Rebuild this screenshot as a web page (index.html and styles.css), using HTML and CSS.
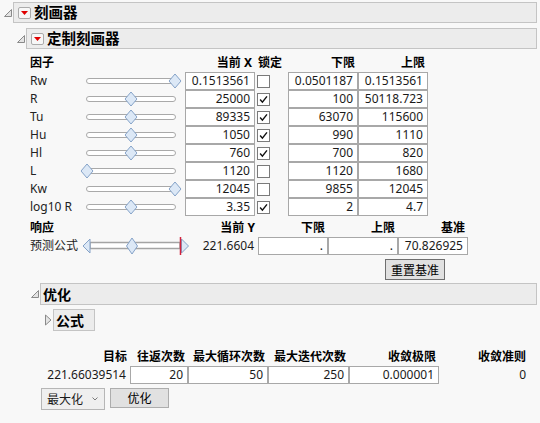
FILE: index.html
```html
<!DOCTYPE html>
<html lang="zh-CN">
  <head>
    <meta charset="UTF-8" />
    <meta name="viewport" content="width=device-width, initial-scale=1.0" />
    <link rel="stylesheet" href="styles.css">
    <title>刻画器</title>
  </head>
  <body>
    <div class="outline lvl1">
      <div class="ohead">
        <svg class="tri" viewBox="0 0 10 10"><polygon points="8.5,1.5 8.5,8.5 1.5,8.5" /></svg>
        <div class="obar">
          <span class="menu"><svg viewBox="0 0 7 4"><polygon points="0,0 7,0 3.5,4" /></svg></span>
          <span class="otitle">刻画器</span>
        </div>
      </div>

      <div class="obody body1">
        <div class="outline lvl2">
          <div class="ohead">
            <svg class="tri" viewBox="0 0 10 10"><polygon points="8.5,1.5 8.5,8.5 1.5,8.5" /></svg>
            <div class="obar">
              <span class="menu"><svg viewBox="0 0 7 4"><polygon points="0,0 7,0 3.5,4" /></svg></span>
              <span class="otitle">定制刻画器</span>
            </div>
          </div>

          <div class="obody body2">
            <!-- factors -->
            <div class="factors">
              <div class="hd left">因子</div>
              <div></div>
              <div class="hd">当前 X</div>
              <div class="hd left lock-hd">锁定</div>
              <div class="hd">下限</div>
              <div class="hd">上限</div>

              <div class="name">Rw</div>
              <div class="cell"><div class="track"><svg class="handle" style="left:100%" viewBox="0 0 13 15"><polygon points="6.5,0.5 12.5,7.5 6.5,14.5 0.5,7.5" /></svg></div></div>
              <div class="box">0.1513561</div>
              <div class="cell"><span class="check"></span></div>
              <div class="box">0.0501187</div>
              <div class="box">0.1513561</div>

              <div class="name">R</div>
              <div class="cell"><div class="track"><svg class="handle" style="left:49.8%" viewBox="0 0 13 15"><polygon points="6.5,0.5 12.5,7.5 6.5,14.5 0.5,7.5" /></svg></div></div>
              <div class="box">25000</div>
              <div class="cell"><span class="check"><svg viewBox="0 0 13 13"><path d="M2.5 6.5 L5.2 9.6 L10.6 2.8" /></svg></span></div>
              <div class="box">100</div>
              <div class="box">50118.723</div>

              <div class="name">Tu</div>
              <div class="cell"><div class="track"><svg class="handle" style="left:50%" viewBox="0 0 13 15"><polygon points="6.5,0.5 12.5,7.5 6.5,14.5 0.5,7.5" /></svg></div></div>
              <div class="box">89335</div>
              <div class="cell"><span class="check"><svg viewBox="0 0 13 13"><path d="M2.5 6.5 L5.2 9.6 L10.6 2.8" /></svg></span></div>
              <div class="box">63070</div>
              <div class="box">115600</div>

              <div class="name">Hu</div>
              <div class="cell"><div class="track"><svg class="handle" style="left:50%" viewBox="0 0 13 15"><polygon points="6.5,0.5 12.5,7.5 6.5,14.5 0.5,7.5" /></svg></div></div>
              <div class="box">1050</div>
              <div class="cell"><span class="check"><svg viewBox="0 0 13 13"><path d="M2.5 6.5 L5.2 9.6 L10.6 2.8" /></svg></span></div>
              <div class="box">990</div>
              <div class="box">1110</div>

              <div class="name">Hl</div>
              <div class="cell"><div class="track"><svg class="handle" style="left:50%" viewBox="0 0 13 15"><polygon points="6.5,0.5 12.5,7.5 6.5,14.5 0.5,7.5" /></svg></div></div>
              <div class="box">760</div>
              <div class="cell"><span class="check"><svg viewBox="0 0 13 13"><path d="M2.5 6.5 L5.2 9.6 L10.6 2.8" /></svg></span></div>
              <div class="box">700</div>
              <div class="box">820</div>

              <div class="name">L</div>
              <div class="cell"><div class="track"><svg class="handle" style="left:0%" viewBox="0 0 13 15"><polygon points="6.5,0.5 12.5,7.5 6.5,14.5 0.5,7.5" /></svg></div></div>
              <div class="box">1120</div>
              <div class="cell"><span class="check"></span></div>
              <div class="box">1120</div>
              <div class="box">1680</div>

              <div class="name">Kw</div>
              <div class="cell"><div class="track"><svg class="handle" style="left:100%" viewBox="0 0 13 15"><polygon points="6.5,0.5 12.5,7.5 6.5,14.5 0.5,7.5" /></svg></div></div>
              <div class="box">12045</div>
              <div class="cell"><span class="check"></span></div>
              <div class="box">9855</div>
              <div class="box">12045</div>

              <div class="name">log10 R</div>
              <div class="cell"><div class="track"><svg class="handle" style="left:50%" viewBox="0 0 13 15"><polygon points="6.5,0.5 12.5,7.5 6.5,14.5 0.5,7.5" /></svg></div></div>
              <div class="box">3.35</div>
              <div class="cell"><span class="check"><svg viewBox="0 0 13 13"><path d="M2.5 6.5 L5.2 9.6 L10.6 2.8" /></svg></span></div>
              <div class="box">2</div>
              <div class="box">4.7</div>
            </div>

            <!-- responses -->
            <div class="responses">
              <div class="hd left">响应</div>
              <div></div>
              <div class="hd">当前 Y</div>
              <div class="hd">下限</div>
              <div class="hd">上限</div>
              <div class="hd">基准</div>

              <div class="name">预测公式</div>
              <div class="cell">
                <svg class="rslider" viewBox="0 0 108 18">
                  <rect class="rtrack" x="8" y="5.5" width="90" height="6" />
                  <polygon class="knob" points="8,2 1,9 8,16" />
                  <polygon class="knob" points="99.5,2 106.5,9 99.5,16" />
                  <line class="limit" x1="98.5" y1="0" x2="98.5" y2="18" />
                  <polygon class="knob" points="50,1 55.5,9 50,17 44.5,9" />
                </svg>
              </div>
              <div class="val">221.6604</div>
              <div class="box">.</div>
              <div class="box">.</div>
              <div class="box">70.826925</div>
            </div>

            <button class="btn reset">重置基准</button>

            <div class="outline lvl3">
              <div class="ohead">
                <svg class="tri" viewBox="0 0 10 10"><polygon points="8.5,1.5 8.5,8.5 1.5,8.5" /></svg>
                <div class="obar">
                  <span class="otitle">优化</span>
                </div>
              </div>

              <div class="obody body3">
                <div class="outline lvl4">
                  <div class="ohead">
                    <svg class="tri" viewBox="0 0 10 12"><polygon points="2.5,1 2.5,11 8,6" /></svg>
                    <div class="obox"><span class="otitle">公式</span></div>
                  </div>
                </div>

                <div class="opt">
                  <div class="hd">目标</div>
                  <div class="hd">往返次数</div>
                  <div class="hd">最大循环次数</div>
                  <div class="hd">最大迭代次数</div>
                  <div class="hd">收敛极限</div>
                  <div class="hd">收敛准则</div>

                  <div class="val">221.66039514</div>
                  <div class="box">20</div>
                  <div class="box">50</div>
                  <div class="box">250</div>
                  <div class="box">0.000001</div>
                  <div class="val">0</div>
                </div>

                <div class="controls">
                  <div class="dropdown">
                    <span>最大化</span>
                    <svg class="chev" viewBox="0 0 6 4"><polyline points="0.5,0.5 3,3 5.5,0.5" /></svg>
                  </div>
                  <button class="btn go">优化</button>
                </div>
              </div>
            </div>
          </div>
        </div>
      </div>
    </div>
  </body>
</html>
```

FILE: styles.css
```css
html,
body {
  margin: 0;
  padding: 0;
}

body {
  width: 540px;
  height: 423px;
  overflow: hidden;
  background: #f8f8f8;
  font-family: "Noto Sans", "Noto Sans CJK SC", sans-serif;
  font-size: 12px;
  color: #1a1a1a;
}

/* outline boxes */
.ohead {
  display: flex;
  align-items: center;
}

.tri {
  flex: none;
  width: 10px;
  height: 10px;
  margin-left: 3px;
}

.tri polygon {
  fill: #e4e4e4;
  stroke: #8a8a8a;
  stroke-width: 1;
}

.lvl4 .tri {
  height: 12px;
}

.obar {
  flex: 1;
  height: 21px;
  box-sizing: border-box;
  margin-right: 3px;
  background: #ececec;
  border: 1px solid #c4c4c4;
  display: flex;
  align-items: center;
}

.menu {
  width: 13px;
  height: 12px;
  box-sizing: border-box;
  margin-left: 4px;
  border: 1px solid #ababab;
  border-radius: 2px;
  background: #f7f7f7;
  display: flex;
  align-items: center;
  justify-content: center;
}

.menu svg {
  width: 7px;
  height: 4px;
}

.menu polygon {
  fill: #e00000;
}

.otitle {
  margin-left: 3px;
  font-size: 14.5px;
  font-weight: bold;
  color: #000;
  line-height: 19px;
}

.lvl1 > .ohead {
  margin-top: 2px;
}

.body1 {
  padding-left: 13px;
}

.lvl2 {
  margin-top: 5px;
}

.body2 {
  padding: 5px 0 0 14px;
}

.lvl3 {
  margin-top: 3px;
}

.lvl3 > .ohead .obar {
  height: 22px;
}

.lvl3 .otitle {
  font-size: 14px;
  margin-left: 2px;
}

.body3 {
  padding-left: 13px;
}

.lvl4 {
  margin-top: 4px;
}

.obox {
  height: 22px;
  box-sizing: border-box;
  padding: 0 10px 0 0;
  background: #ececec;
  border: 1px solid #c4c4c4;
  display: flex;
  align-items: center;
}

.obox .otitle {
  font-size: 14px;
}

/* tables */
.factors,
.responses,
.opt {
  display: grid;
  grid-auto-rows: 18px;
}

.factors {
  margin-left: 3px;
  grid-template-columns: 56px 99px 70px 33px 70px 70px;
}

.responses {
  margin: 3px 0 0 3px;
  grid-template-columns: 52px 108px 68px 70px 70px 70px;
}

.opt {
  margin-top: 17px;
  grid-template-columns: 90px 58px 80px 81px 90px 90px;
}

.hd {
  font-weight: bold;
  color: #000;
  text-align: right;
  padding-right: 3px;
  line-height: 18px;
  white-space: nowrap;
}

.hd.left {
  text-align: left;
  padding-right: 0;
}

.lock-hd {
  padding-left: 3px;
}

.name {
  line-height: 18px;
  white-space: nowrap;
  color: #222;
}

.cell {
  display: flex;
  align-items: center;
}

.box {
  box-sizing: border-box;
  height: 18px;
  border: 1px solid #a8a8a8;
  background: #fff;
  text-align: right;
  padding-right: 4px;
  line-height: 16px;
  white-space: nowrap;
}

.val {
  text-align: right;
  padding-right: 4px;
  line-height: 18px;
  white-space: nowrap;
}

.opt .val:last-child {
  padding-right: 3px;
}

/* sliders */
.track {
  position: relative;
  width: 90px;
  height: 6px;
  box-sizing: border-box;
  border: 1.5px solid #a9a9a9;
  border-radius: 3px;
  background: #fff;
}

.handle {
  position: absolute;
  top: 50%;
  width: 13px;
  height: 15px;
  transform: translate(-50%, -50%);
}

.handle polygon,
.knob {
  fill: #dce8f6;
  stroke: #85a2c8;
  stroke-width: 1;
}

.rslider {
  width: 108px;
  height: 18px;
}

.rtrack {
  fill: #fff;
  stroke: #a4a4a4;
  stroke-width: 1.5;
}

.limit {
  stroke: #d3223c;
  stroke-width: 1.5;
}

.check {
  width: 13px;
  height: 13px;
  box-sizing: border-box;
  margin-left: 2px;
  border: 1px solid #7a7a7a;
  background: #fff;
  display: flex;
}

.check svg {
  width: 11px;
  height: 11px;
}

.check path {
  fill: none;
  stroke: #111;
  stroke-width: 1.7;
}

/* buttons */
.btn {
  font-family: inherit;
  font-size: 12px;
  color: #000;
  padding: 0;
  background: #e1e1e1;
  border: 1px solid #adadad;
  border-radius: 0;
}

.reset {
  display: block;
  margin: 4px 0 0 358px;
  width: 60px;
  height: 21px;
  border-color: #6f6f6f;
}

.controls {
  display: flex;
  align-items: flex-start;
  gap: 5px;
  margin-top: 4px;
}

.dropdown {
  width: 64px;
  height: 22px;
  box-sizing: border-box;
  margin-left: 1px;
  padding: 0 6px 0 5px;
  border: 1px solid #b6b6b6;
  background: #efefef;
  display: flex;
  align-items: center;
  justify-content: space-between;
}

.chev {
  width: 6px;
  height: 4px;
}

.chev polyline {
  fill: none;
  stroke: #7a7a7a;
  stroke-width: 1;
}

.go {
  width: 59px;
  height: 20px;
}
```
